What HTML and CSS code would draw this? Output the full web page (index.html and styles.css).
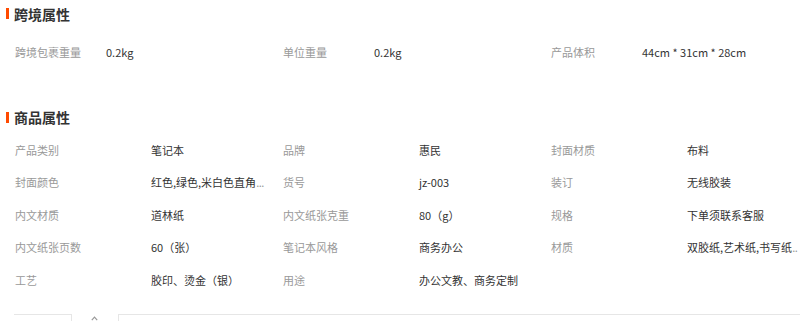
FILE: index.html
```html
<!DOCTYPE html>
<html lang="zh-CN">
<head>
<meta charset="utf-8">
<title>商品属性</title>
<link rel="stylesheet" href="styles.css">
</head>
<body>
<div class="attrs">
  <section class="group group-cross">
    <h3 class="group-title">跨境属性</h3>
    <div class="grid">
      <div class="item"><span class="label">跨境包裹重量</span><span class="value">0.2kg</span></div>
      <div class="item"><span class="label">单位重量</span><span class="value">0.2kg</span></div>
      <div class="item"><span class="label">产品体积</span><span class="value">44cm * 31cm * 28cm</span></div>
    </div>
  </section>
  <section class="group group-goods">
    <h3 class="group-title">商品属性</h3>
    <div class="grid">
      <div class="item"><span class="label">产品类别</span><span class="value">笔记本</span></div>
      <div class="item"><span class="label">品牌</span><span class="value">惠民</span></div>
      <div class="item"><span class="label">封面材质</span><span class="value">布料</span></div>

      <div class="item"><span class="label">封面颜色</span><span class="value">红色,绿色,米白色直角<span class="more">...</span></span></div>
      <div class="item"><span class="label">货号</span><span class="value">jz-003</span></div>
      <div class="item"><span class="label">装订</span><span class="value">无线胶装</span></div>

      <div class="item"><span class="label">内文材质</span><span class="value">道林纸</span></div>
      <div class="item"><span class="label">内文纸张克重</span><span class="value">80（g）</span></div>
      <div class="item"><span class="label">规格</span><span class="value">下单须联系客服</span></div>

      <div class="item"><span class="label">内文纸张页数</span><span class="value">60（张）</span></div>
      <div class="item"><span class="label">笔记本风格</span><span class="value">商务办公</span></div>
      <div class="item"><span class="label">材质</span><span class="value">双胶纸,艺术纸,书写纸<span class="more">..</span></span></div>

      <div class="item"><span class="label">工艺</span><span class="value">胶印、烫金（银）</span></div>
      <div class="item"><span class="label">用途</span><span class="value">办公文教、商务定制</span></div>
    </div>
  </section>
</div>
<div class="tabs">
  <div class="tab tab-first"></div>
  <div class="tab-toggle">
    <svg class="caret" width="7" height="5" viewBox="0 0 7 5"><path d="M0.8 4.2 L3.5 1.2 L6.2 4.2" fill="none" stroke="#999" stroke-width="1.2"/></svg>
  </div>
  <div class="tab tab-rest"></div>
</div>
</body>
</html>
```

FILE: styles.css
```css
html, body {
  margin: 0;
  padding: 0;
  background: #fff;
}
body {
  width: 800px;
  height: 321px;
  overflow: hidden;
  font-family: "Noto Sans CJK SC", "Noto Sans", sans-serif;
  font-size: 11px;
  color: #333;
}
.group-title {
  margin: 0;
  height: 27px;
  display: flex;
  align-items: center;
  padding-left: 6px;
  font-size: 14px;
  font-weight: bold;
  color: #333;
}
.group-title::before {
  content: "";
  width: 3px;
  height: 11px;
  background: #ff4a00;
  margin-right: 5px;
}
.grid {
  display: grid;
  grid-template-columns: 268px 268px 1fr;
  padding-left: 15px;
}
.item {
  display: flex;
  align-items: center;
  min-width: 0;
  white-space: nowrap;
}
.label {
  flex: none;
  color: #999;
}
.value {
  color: #333;
}
.more {
  color: #999;
  letter-spacing: -0.5px;
}
.group-cross .grid {
  margin-top: 8.5px;
}
.group-cross .item {
  height: 32px;
}
.group-cross .label {
  width: 91px;
}
.group-goods {
  margin-top: 36px;
}
.group-goods .grid {
  margin-top: 2.75px;
}
.group-goods .item {
  height: 32.5px;
}
.group-goods .label {
  width: 136px;
}
.tabs {
  display: flex;
  margin-top: 18px;
  padding-left: 14px;
  height: 10px;
}
.tab {
  border-top: 1px solid #e6e6e6;
}
.tab-first {
  width: 57px;
  border-right: 1px solid #e6e6e6;
}
.tab-toggle {
  width: 46px;
  display: flex;
  justify-content: center;
  padding-top: 2px;
}
.caret {
  margin-left: -1px;
}
.tab-rest {
  flex: 1;
  border-left: 1px solid #e6e6e6;
}
```
